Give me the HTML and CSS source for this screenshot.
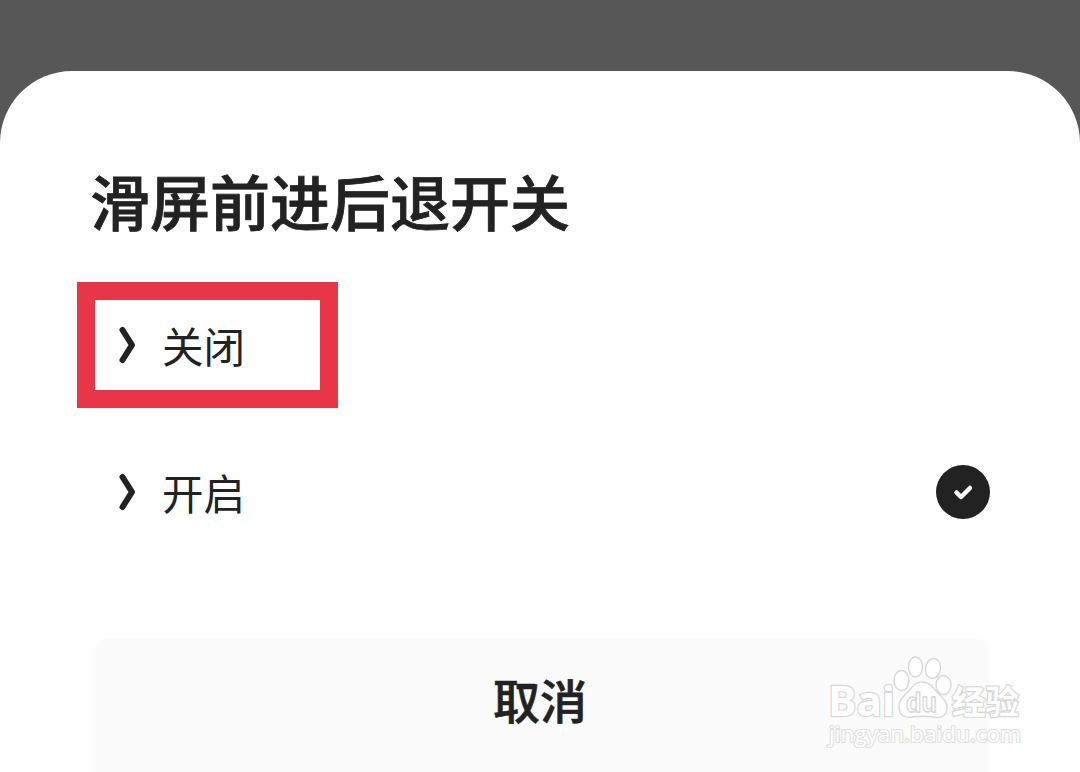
FILE: index.html
```html
<!DOCTYPE html>
<html lang="zh-CN">
<head>
    <meta charset="UTF-8">
    <meta name="viewport" content="width=device-width, initial-scale=1.0">
    <title>滑屏前进后退开关</title>
    <link rel="stylesheet" href="styles.css">
</head>
<body>
    <div class="sheet">
        <h2 class="title">滑屏前进后退开关</h2>
        <div class="options">
            <div class="option highlight">
                <svg class="arrow" width="20" height="38" viewBox="0 0 20 38">
                    <path d="M5.500 4 L15 19 L5.500 34" />
                </svg>
                <span>关闭</span>
            </div>
            <div class="option">
                <svg class="arrow" width="20" height="38" viewBox="0 0 20 38">
                    <path d="M5.500 4 L15 19 L5.500 34" />
                </svg>
                <span>开启</span>
                <svg class="check" width="54" height="54" viewBox="0 0 54 54">
                    <circle cx="27" cy="27" r="27" />
                    <path d="M20.500 27.500 L25 32 L34 23" />
                </svg>
            </div>
        </div>
        <button class="cancel">取消</button>
    </div>

    <!-- watermark -->
    <svg class="watermark" width="220" height="120" viewBox="0 0 220 120">
        <g class="logo">
            <text class="brand" x="8" y="76" font-size="42" textLength="67" lengthAdjust="spacingAndGlyphs">Bai</text>
            <ellipse cx="81.500" cy="40.500" rx="7.500" ry="10" />
            <ellipse cx="95.500" cy="27" rx="7" ry="10" />
            <ellipse cx="113" cy="28.500" rx="7.500" ry="10" transform="rotate(10 113 28.500)" />
            <ellipse cx="123.500" cy="45" rx="7.500" ry="9.500" />
            <path d="M102 42 C95 42 92 47 88 52 C83 57 78 61 79 69 C80 76 86 78 92 77 C99 76 106 76 113 77 C120 79 126 76 127 69 C128 61 121 57 117 52 C113 47 109 42 102 42 Z" />
            <text class="du" x="86" y="72" font-size="27" textLength="31" lengthAdjust="spacingAndGlyphs">du</text>
            <text class="jingyan" x="132" y="74" font-size="33" textLength="67" lengthAdjust="spacingAndGlyphs">经验</text>
        </g>
        <text class="site" x="9" y="102" font-size="22" textLength="192" lengthAdjust="spacingAndGlyphs">jingyan.baidu.com</text>
    </svg>
</body>
</html>
```

FILE: styles.css
```css
* {
    box-sizing: border-box;
}
body {
    margin: 0;
    height: 100vh;
    padding-top: 71px;
    overflow: hidden;
    background-color: #575757;
    color: #222;
    font-family: "Noto Sans CJK SC", sans-serif;
}
.sheet {
    height: 701px;
    padding: 84px 90px 0;
    background-color: #fefefe;
    border-radius: 72px 72px 0 0;
    display: flex;
    flex-direction: column;
}
.title {
    margin: 0;
    height: 90px;
    line-height: 90px;
    font-size: 60px;
    font-weight: 500;
    -webkit-text-stroke: 0.8px #222;
}
.options {
    margin-top: 37px;
}
.option {
    display: flex;
    align-items: center;
    height: 126px;
    padding-left: 27px;
    font-size: 41.5px;
    line-height: 60px;
    font-weight: 400;
}
.option span {
    margin-left: 25px;
}
.option + .option {
    margin-top: 21px;
}
.highlight {
    width: 261px;
    margin-left: -13px;
    padding-left: 22px;
    border: 18px solid #e83547;
}
.arrow {
    fill: none;
    stroke: #222;
    stroke-width: 6;
    stroke-linecap: round;
    stroke-linejoin: round;
}
.check {
    margin-left: auto;
}
.check circle {
    fill: #222;
}
.check path {
    fill: none;
    stroke: #fff;
    stroke-width: 4.5;
    stroke-linecap: round;
    stroke-linejoin: round;
}
.cancel {
    flex: 1;
    margin: 84px 0 0 4px;
    padding: 0 4px 14px 0;
    border: none;
    border-radius: 12px 12px 0 0;
    background-color: #fbfbfb;
    color: #222;
    font-family: inherit;
    font-size: 47px;
    font-weight: 500;
    -webkit-text-stroke: 0.6px #222;
}
.watermark {
    position: absolute;
    left: 820px;
    top: 640px;
    fill: #fff;
    stroke: #d8d8d8;
    stroke-width: 1.4;
}
.watermark text {
    font-weight: 700;
}
.watermark .brand {
    font-family: "Open Sans", sans-serif;
    stroke-width: 2.4;
    paint-order: stroke;
}
.watermark .jingyan {
    font-family: "Noto Sans CJK SC", sans-serif;
    stroke-width: 2.4;
    paint-order: stroke;
}
.watermark .du {
    font-family: "Liberation Sans", sans-serif;
}
.watermark .site {
    font-family: "Open Sans", sans-serif;
    font-weight: 400;
    stroke-width: 2.2;
    stroke: #e0e0e0;
    paint-order: stroke;
}
```
